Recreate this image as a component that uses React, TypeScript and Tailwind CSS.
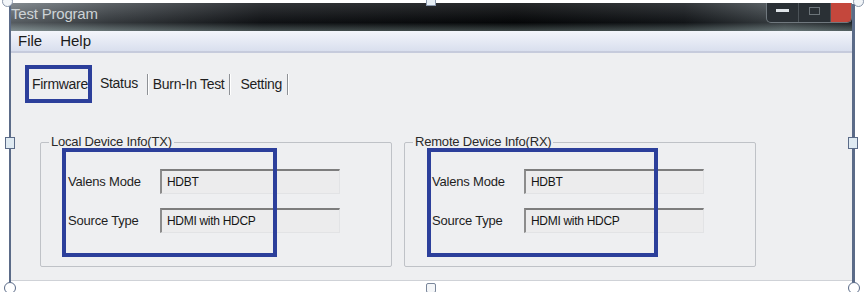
import React from 'react';

const Field = ({ label, value }: { label: string; value: string }) => (
  <div className="flex items-center h-[25px]">
    <span className="w-[92px] text-[13px] text-[#1e1e1e] tracking-[-0.2px]">{label}</span>
    <div className="w-[180px] h-[25px] flex items-center pl-[5px] bg-[#ececed] border-t-[2px] border-l-[2px] border-t-[#7d7d7d] border-l-[#8c8c8c] border-r border-b border-r-[#e2e3e5] border-b-[#e2e3e5] text-[12px] text-[#151515] tracking-[-0.3px]">
      {value}
    </div>
  </div>
);

const GroupBox = ({ title, highlightWidth, highlightLeft }: { title: string; highlightWidth: number; highlightLeft: number }) => (
  <div className="relative w-[352px] h-[125px] border border-[#bfc2c7] rounded-[2px] pl-[27px] pt-[26px] flex flex-col gap-[14px]">
    <span className="absolute -top-[9px] left-[8px] px-[2px] bg-[#eeeff1] text-[13px] leading-[16px] text-[#2a2a2a] tracking-[-0.2px]">
      {title}
    </span>
    <Field label="Valens Mode" value="HDBT" />
    <Field label="Source Type" value="HDMI with HDCP" />
    {/* highlight rectangle drawn over the screenshot */}
    <div
      className="absolute top-[5px] h-[109px] border-[4px] border-[#2c3f9b]"
      style={{ left: highlightLeft, width: highlightWidth }}
    />
  </div>
);

const Sep = () => <span className="block w-[2px] h-[21px] border-l border-l-[#8e9196] border-r border-r-white" />;

export default function App() {
  return (
    <div className="relative w-[864px] h-[292px] bg-white overflow-hidden font-['Liberation_Sans',Arial,sans-serif]">
      <div className="flex flex-col pt-[3px] pl-[10px] pr-[12px]">
        <div className="flex flex-col h-[278px] border-b border-[#cfd2d7]">
          {/* Title bar */}
          <div className="relative h-[28px] flex bg-[linear-gradient(to_right,#737b81_0%,#454b50_12%,#15181c_30%,#07090b_60%,#181c20_80%,#4a5257_92%,#2b3135_100%)]">
            <div className="absolute inset-0 bg-[linear-gradient(to_bottom,rgba(255,255,255,0.12),rgba(0,0,0,0.25)_70%,rgba(160,185,180,0.35))]" />
            <span className="relative pt-[1px] pl-[1px] text-[15px] leading-[20px] text-[#cdd3d6] tracking-[-0.2px]">Test Program</span>
            <div className="relative ml-auto w-[86px] h-[20px] rounded-b-[5px] border border-t-0 border-[#70787e] bg-[#2a3035] flex items-stretch">
              <div className="flex-1 flex items-center justify-center border-r border-[#4b5257]">
                <span className="w-[13px] h-[3px] bg-[#dfe4e8] mt-[-4px]" />
              </div>
              <div className="flex-1 flex items-center justify-center border-r border-[#4b5257]">
                <span className="w-[11px] h-[8px] border border-[#6c7479] mt-[-4px]" />
              </div>
              <div className="w-[20px] rounded-br-[4px] bg-[#c4473c]" />
            </div>
          </div>

          {/* Menu bar */}
          <div className="h-[22px] flex items-center gap-[18px] pl-[8px] bg-[linear-gradient(to_bottom,#f3f5fb,#d9dfee)] border-b-[2px] border-[#c6cbdc] text-[15px] text-[#1b1b1b]">
            <span>File</span>
            <span>Help</span>
          </div>

          {/* Content */}
          <div className="relative flex-1 bg-[#eeeff1] flex flex-col">
            <div className="flex items-center h-[20px] mt-[21px] pl-[22px] text-[14px] text-[#1e1e1e] tracking-[-0.3px]">
              <span>Firmware</span>
              <span className="ml-[12px] -mt-[2px]">Status</span>
              <span className="ml-[9px]"><Sep /></span>
              <span className="ml-[4px]">Burn-In Test</span>
              <span className="ml-[5px]"><Sep /></span>
              <span className="ml-[9px]">Setting</span>
              <span className="ml-[5px]"><Sep /></span>
            </div>

            <div className="flex gap-[12px] mt-[48px] ml-[30px]">
              <GroupBox title="Local Device Info(TX)" highlightLeft={21} highlightWidth={215} />
              <GroupBox title="Remote Device Info(RX)" highlightLeft={22} highlightWidth={231} />
            </div>

            {/* highlight around Firmware tab */}
            <div className="absolute left-[15px] top-[12px] w-[67px] h-[38px] border-[4px] border-[#2c3f9b]" />
          </div>
        </div>
      </div>

      {/* image selection frame */}
      <div className="absolute left-[9px] top-[4px] w-[2px] h-[281px] bg-[#5b6b88]" />
      <div className="absolute left-[852px] top-[4px] w-[3px] h-[281px] bg-[#5b6b88]" />
      <div className="absolute left-[5px] top-[137px] w-[10px] h-[12px] bg-[#dfeaf2] border border-[#5b6b88]" />
      <div className="absolute left-[848px] top-[137px] w-[10px] h-[12px] bg-[#dfeaf2] border border-[#5b6b88]" />
      <div className="absolute left-[426px] -top-[4px] w-[10px] h-[10px] bg-[#e6eef4] border border-[#8a97ab]" />
      <div className="absolute left-[426px] top-[283px] w-[10px] h-[10px] bg-[#f4f6f8] border border-[#7a879b] rounded-[2px]" />
      <div className="absolute left-[2px] -top-[4px] w-[11px] h-[11px] rounded-full bg-[#f2f5f8] border border-[#8a97ab]" />
      <div className="absolute left-[853px] -top-[4px] w-[11px] h-[11px] rounded-full bg-[#f2f5f8] border border-[#8a97ab]" />
      <div className="absolute left-[4px] top-[282px] w-[12px] h-[12px] rounded-full bg-white border border-[#5b6b88]" />
      <div className="absolute left-[848px] top-[282px] w-[12px] h-[12px] rounded-full bg-white border border-[#5b6b88]" />
    </div>
  );
}
